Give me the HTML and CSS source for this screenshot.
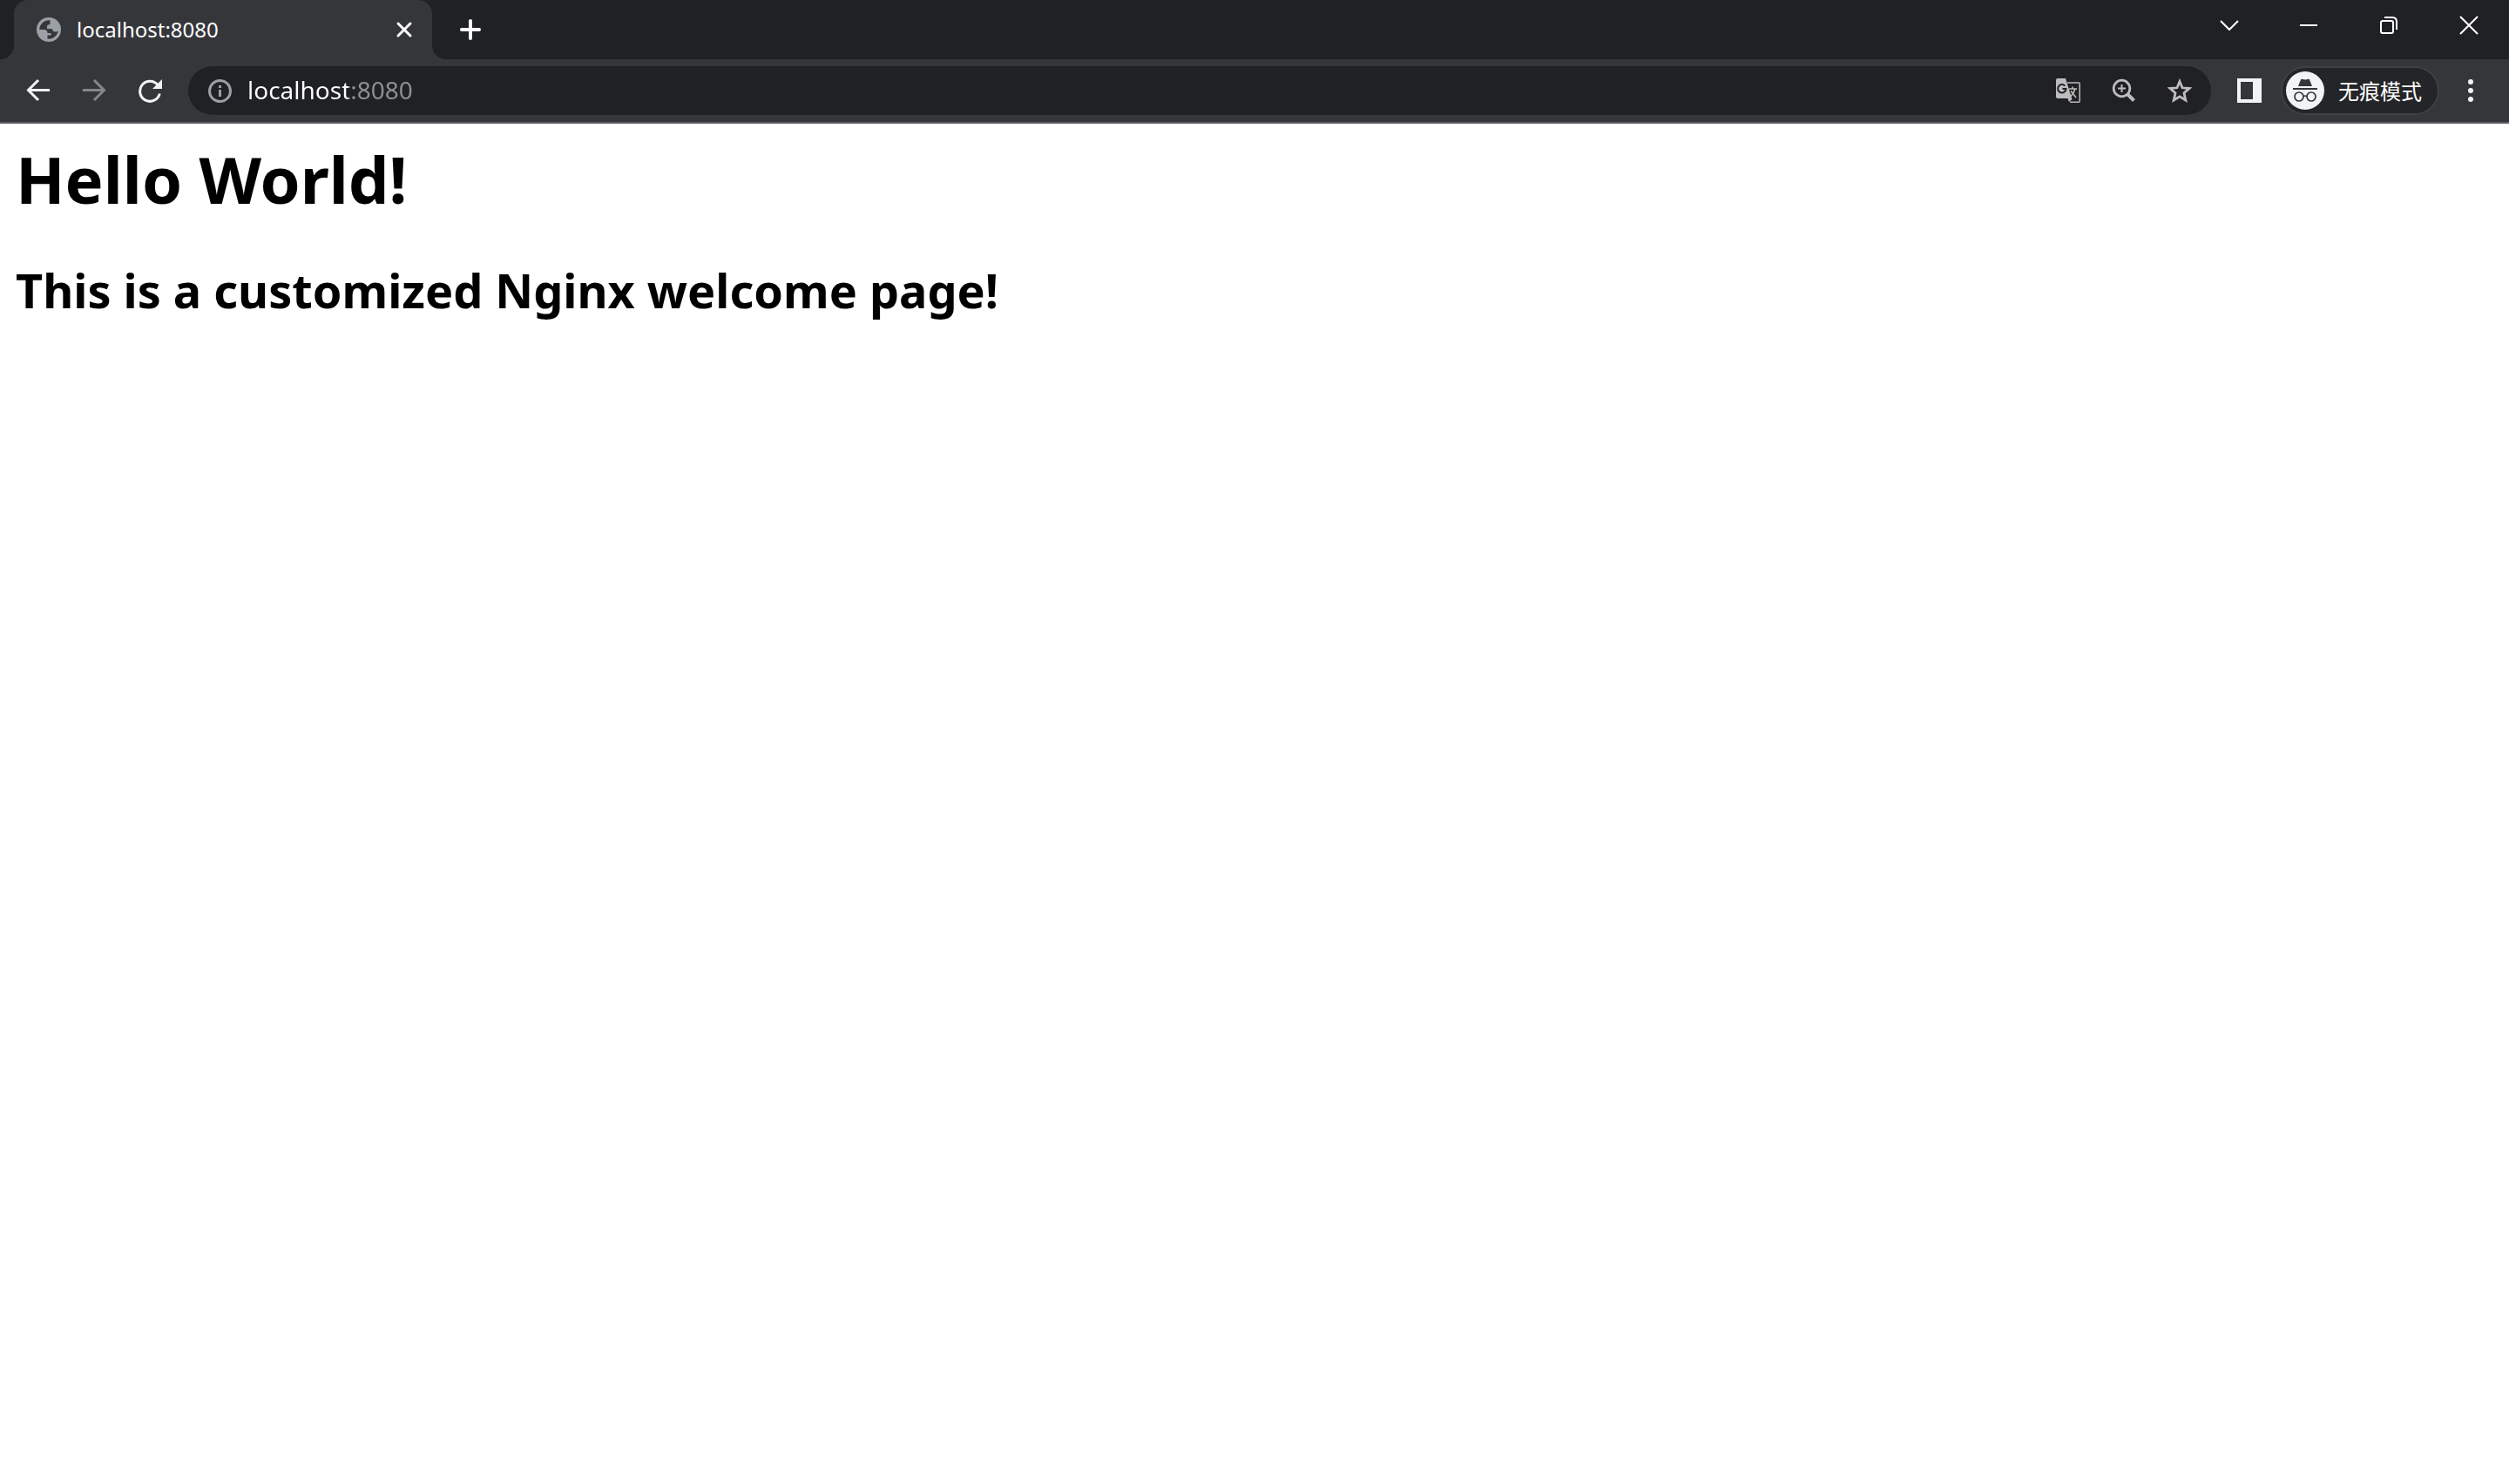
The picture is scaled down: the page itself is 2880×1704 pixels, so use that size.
FILE: index.html
```html
<!DOCTYPE html>
<html lang="zh-CN">
<head>
<meta charset="utf-8">
<title>localhost:8080</title>
<link rel="stylesheet" href="styles.css">
</head>
<body>
<header class="browser">
  <div class="tab-strip">
    <div class="tab">
      <button class="tab-select" type="button">
        <svg class="icon-28" viewBox="0 0 28 28" aria-hidden="true"><circle cx="14" cy="14" r="14" fill="#9aa0a6"/><path fill="#35363a" d="M15.500 3.200C9 2.500 3.500 7.500 3.200 14H8.500C11 14 12.500 15.500 12.500 18H16.500V20.500H12.500V24.500C18.500 25.500 24 21 24.800 15.500C23.500 16.500 22.500 16.500 21.500 16.500C19 16.500 18 15 18 13.200L12 13V10.500C12 9 13 8 15.500 8Z"/></svg>
        <span>localhost:8080</span>
      </button>
      <button class="tab-close" type="button" aria-label="关闭">
        <svg class="icon-28" viewBox="0 0 28 28" aria-hidden="true"><path d="M7 7 21 21M21 7 7 21" stroke="#fff" stroke-width="3" stroke-linecap="round"/></svg>
      </button>
    </div>
    <button class="tool-button" type="button" aria-label="新标签页">
      <svg class="icon-28" viewBox="0 0 28 28" aria-hidden="true"><path d="M14 4V24M4 14H24" stroke="#fff" stroke-width="4" stroke-linecap="round"/></svg>
    </button>
    <div class="window-controls">
      <button class="window-button" type="button" aria-label="搜索标签页"><svg class="icon-28" viewBox="0 0 28 28" aria-hidden="true"><path d="M5 9 15 19 25 9" fill="none" stroke="#fff" stroke-width="2"/></svg></button>
      <button class="window-button" type="button" aria-label="最小化"><svg class="icon-28" viewBox="0 0 28 28" aria-hidden="true"><path d="M4 14H24" stroke="#fff" stroke-width="2"/></svg></button>
      <button class="window-button" type="button" aria-label="向下还原"><svg class="icon-28" viewBox="0 0 28 28" aria-hidden="true"><g fill="none" stroke="#fff" stroke-width="2"><rect x="5" y="9" width="14" height="14" rx="2"/><path d="M9 5H18Q23 5 23 10V19"/></g></svg></button>
      <button class="window-button" type="button" aria-label="关闭窗口"><svg class="icon-28" viewBox="0 0 28 28" aria-hidden="true"><path d="M4 4 24 24M24 4 4 24" stroke="#fff" stroke-width="2"/></svg></button>
    </div>
  </div>

  <div class="toolbar">
    <nav class="navigation" aria-label="导航">
      <button class="tool-button" type="button" aria-label="后退"><svg class="icon-28" viewBox="0 0 28 28" aria-hidden="true"><path d="M27 13.500H2.500M14 2 2.500 13.500 14 25" fill="none" stroke="#f1f3f4" stroke-width="3"/></svg></button>
      <button class="tool-button" type="button" aria-label="前进"><svg class="icon-28" viewBox="0 0 28 28" aria-hidden="true"><path d="M1 13.500H25M14 2 25.500 13.500 14 25" fill="none" stroke="#86878a" stroke-width="3"/></svg></button>
      <button class="tool-button" type="button" aria-label="重新加载"><svg class="icon-28" viewBox="0 0 28 28" aria-hidden="true"><path d="M23 7.500A11.500 11.500 0 1 0 25.300 17.500" fill="none" stroke="#f1f3f4" stroke-width="3"/><path d="M28 1V12H17Z" fill="#f1f3f4"/></svg></button>
    </nav>
    <div class="address-bar">
      <button class="site-info" type="button" aria-label="查看网站信息"><svg class="icon-28" viewBox="0 0 28 28" aria-hidden="true"><circle cx="14.500" cy="14.500" r="12" fill="none" stroke="#9aa0a6" stroke-width="3"/><path d="M13 8H16V11H13ZM13 13H16V21H13Z" fill="#9aa0a6"/></svg></button>
      <input class="address" type="text" value="localhost:8080" spellcheck="false" aria-label="地址和搜索栏">
      <div class="page-actions">
        <button class="tool-button" type="button" aria-label="翻译此页"><svg class="icon-28" viewBox="0 0 28 28" aria-hidden="true"><path d="M13 5H26.200Q27.200 5 27.200 6V26Q27.200 27.200 26.200 27.200H16" fill="none" stroke="#bdbdbd" stroke-width="1.500"/><path d="M2 0H11L17 19.500 18.500 24 15 27 13.500 23H2Q0 23 0 21V2Q0 0 2 0Z" fill="#bdbdbd"/><path d="M10.300 8.600A4.700 4.700 0 1 0 11.500 12H7.500" fill="none" stroke="#202124" stroke-width="2"/><path d="M14.500 12H24M19 9.500V12M22 12Q20.500 17.500 16.500 21M17 14.500 23 22" fill="none" stroke="#bdbdbd" stroke-width="1.600"/></svg></button>
        <button class="tool-button" type="button" aria-label="缩放"><svg class="icon-28" viewBox="0 0 28 28" aria-hidden="true"><g fill="none" stroke="#bdbdbd"><circle cx="11.500" cy="11.500" r="9.300" stroke-width="2.800"/><path d="M11.500 7V16M7 11.500H16" stroke-width="2"/><path d="M18 18 25.500 25.500" stroke-width="4"/></g></svg></button>
        <button class="tool-button" type="button" aria-label="为此标签页添加书签"><svg class="icon-28" viewBox="0 0 28 28" aria-hidden="true"><path d="M14 3.500 17 10.800 25 11.500 19 16.700 20.800 25 14 20.800 7.200 25 9 16.700 3 11.500 11 10.800Z" fill="none" stroke="#bdbdbd" stroke-width="2.800"/></svg></button>
      </div>
    </div>
    <div class="browser-actions">
      <button class="tool-button" type="button" aria-label="侧边栏"><svg class="icon-28" viewBox="0 0 28 28" aria-hidden="true"><path d="M0 0H28V28H0ZM4 4V24H18V4Z" fill="#f1f3f4" fill-rule="evenodd"/></svg></button>
      <button class="profile" type="button">
        <svg class="avatar" viewBox="0 0 44 44" aria-hidden="true"><circle cx="22" cy="22" r="22" fill="#f1f3f4"/><path d="M14 17 17 9.500Q17.500 8.500 18.500 8.800Q22 10 25.500 8.800Q26.500 8.500 27 9.500L30 17ZM8 19H36V21H8Z" fill="#35363a"/><g fill="none" stroke="#35363a" stroke-width="1.700"><circle cx="15" cy="29" r="5"/><circle cx="29" cy="29" r="5"/><path d="M20 28.500Q22 27.500 24 28.500"/></g></svg>
        <span>无痕模式</span>
      </button>
      <button class="tool-button" type="button" aria-label="菜单"><svg class="icon-28" viewBox="0 0 28 28" aria-hidden="true"><g fill="#f1f3f4"><circle cx="14" cy="4" r="3"/><circle cx="14" cy="14" r="3"/><circle cx="14" cy="24" r="3"/></g></svg></button>
    </div>
  </div>
</header>

<main class="page">
  <h1 class="title">Hello World!</h1>
  <h2 class="subtitle">This is a customized Nginx welcome page!</h2>
</main>
</body>
</html>
```
FILE: styles.css
```css
* {
  box-sizing: border-box;
}

body {
  margin: 0;
  background: #fff;
  color: #000;
  font-family: "Noto Sans", "Noto Sans CJK SC", sans-serif;
}

button {
  display: flex;
  align-items: center;
  justify-content: center;
  flex: none;
  margin: 0;
  padding: 0;
  border: 0;
  background: none;
  color: #fff;
  font: inherit;
}

svg {
  display: block;
  flex: none;
}

.icon-28 {
  width: 28px;
  height: 28px;
}

.browser {
  background: #35363a;
  color: #fff;
  border-bottom: 2px solid #5f5c63;
}

.tab-strip {
  display: flex;
  align-items: center;
  gap: 16px;
  height: 68px;
  padding-left: 16px;
  background: #202124;
}

.tab {
  position: relative;
  display: flex;
  align-items: center;
  width: 480px;
  height: 68px;
  padding: 0 18px 0 26px;
  border-radius: 16px 16px 0 0;
  background: #35363a;
}

.tab::before,
.tab::after {
  content: "";
  position: absolute;
  bottom: 0;
  width: 16px;
  height: 16px;
}

.tab::before {
  right: 100%;
  background: radial-gradient(circle at 0 0, #202124 16px, #35363a 16px);
}

.tab::after {
  left: 100%;
  background: radial-gradient(circle at 100% 0, #202124 16px, #35363a 16px);
}

.tab-select {
  flex: 1;
  justify-content: flex-start;
  gap: 18px;
  font-size: 24px;
  line-height: 32px;
}

.tool-button {
  width: 56px;
  height: 56px;
}

.window-controls {
  display: flex;
  align-self: flex-start;
  margin-left: auto;
}

.window-button {
  width: 92px;
  height: 58px;
}

.toolbar {
  display: flex;
  align-items: center;
  gap: 16px;
  height: 72px;
  padding: 0 16px;
}

.navigation,
.page-actions,
.browser-actions {
  display: flex;
  align-items: center;
  gap: 8px;
}

.address-bar {
  display: flex;
  align-items: center;
  flex: 1;
  height: 56px;
  padding: 0 8px 0 22px;
  border-radius: 28px;
  background: #202124;
}

/* The host is white and the port is dimmed by a hard stop clipped to the text. */
.address {
  flex: 1;
  min-width: 0;
  height: 56px;
  margin: 0;
  padding: 0 0 2px 18px;
  border: 0;
  outline: 0;
  background: linear-gradient(90deg, #fff 134px, #8e9094 134px);
  -webkit-background-clip: text;
  background-clip: text;
  color: #fff;
  -webkit-text-fill-color: transparent;
  font: 28px/40px "Noto Sans", sans-serif;
}

.profile {
  height: 56px;
  padding: 0 18px 0 4px;
  gap: 16px;
  border: 2px solid #3f4043;
  border-radius: 28px;
  background: #242528;
  font-family: "Noto Sans CJK SC", sans-serif;
  font-size: 24px;
  line-height: 32px;
}

.avatar {
  width: 44px;
  height: 44px;
}

.page {
  padding: 14px 18px;
}

.title,
.subtitle {
  margin: 0;
  font-weight: 700;
}

.title {
  font-size: 74px;
  line-height: 100px;
}

.subtitle {
  margin-top: 40px;
  font-size: 54px;
  line-height: 74px;
}
```
